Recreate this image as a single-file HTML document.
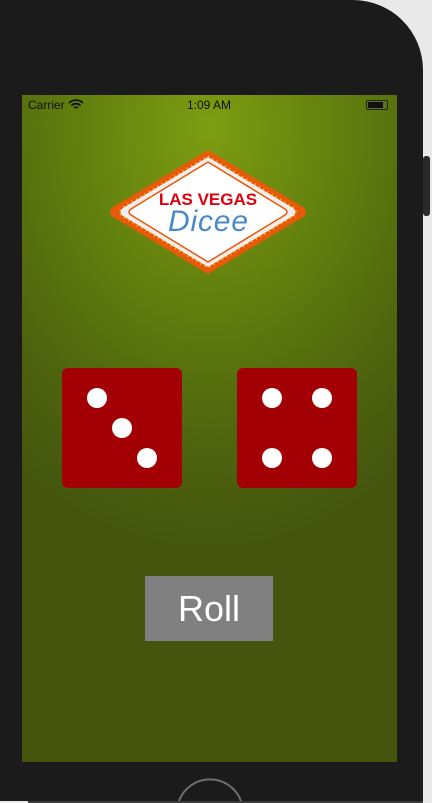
<!DOCTYPE html>
<html><head><style>
html,body{margin:0;width:432px;height:803px;overflow:hidden}
body{background:#e9e9e9;font-family:"Liberation Sans",sans-serif}
#w{position:relative;width:432px;height:803px;overflow:hidden}
.screen{position:absolute;left:22px;top:95px;width:375px;height:667px;background:radial-gradient(ellipse 320px 420px at 50% 5%,#7d9d12 0%,#62800e 40%,#4e640e 75%,#45550e 100%)}
.sb{position:absolute;top:3px;font-size:12px;color:#111}
.die{position:absolute;width:120px;height:120px;background:#a30006;border-radius:6px}
.dot{position:absolute;width:20px;height:20px;border-radius:50%;background:#fff}
.roll{position:absolute;left:123px;top:481px;width:128px;height:65px;background:#808080;color:#fff;font-size:36px;text-align:center;line-height:65px}
</style></head><body><div id="w">
<svg style="position:absolute;left:0;top:0" width="432" height="803" viewBox="0 0 432 803">
<path d="M0 0 H353 A70 70 0 0 1 423 70 V801 H0 Z" fill="#1b1b1b"/>
<rect x="423" y="156" width="7" height="60" rx="3" fill="#2a2a2a"/>
<rect x="28" y="801" width="395" height="2" fill="#3a3a3a"/>
<path d="M179 801 A33 33 0 0 1 241 801" fill="none" stroke="#6e6e6e" stroke-width="2"/>
</svg>
<div class="screen">
<div class="sb" style="left:6px">Carrier <svg width="16" height="11" viewBox="0 0 16 11" style="vertical-align:-1px"><path d="M1 4a10 10 0 0 1 14 0M3.5 6.5a6.5 6.5 0 0 1 9 0M6 9a3 3 0 0 1 4 0" stroke="#111" stroke-width="1.8" fill="none"/></svg></div>
<div class="sb" style="left:165px">1:09 AM</div>
<div style="position:absolute;left:344px;top:5px;width:20px;height:8px;border:1px solid #222;border-radius:2px"><div style="margin:1px;width:15px;height:6px;background:#111"></div></div>
<svg style="position:absolute;left:87px;top:52px" width="198" height="130" viewBox="0 0 198 130">
<path d="M99 3 L194 60 Q200 65 194 70 L99 127 L4 70 Q-2 65 4 60 Z" fill="#e85a0a"/>
<path d="M99 3 L194 60 Q200 65 194 70 L99 127 L4 70 Q-2 65 4 60 Z" fill="none" stroke="#ffd21a" stroke-width="2.5" stroke-dasharray="1 4.5" transform="translate(9.9 6.5) scale(0.9)"/>
<path d="M99 10 L184 61 Q189 65 184 69 L99 120 L14 69 Q9 65 14 61 Z" fill="#eee"/>
<path d="M99 15 L176 62 Q180 65 176 68 L99 115 L22 68 Q18 65 22 62 Z" fill="#fff" stroke="#e85a0a" stroke-width="1.5"/>
<text x="99" y="58" text-anchor="middle" font-family="Liberation Sans" font-weight="bold" font-size="17" fill="#e0000e">LAS VEGAS</text>
<text x="99" y="84" text-anchor="middle" font-family="Liberation Sans" font-style="italic" font-size="30" fill="#4a8ac8" textLength="80">Dicee</text>
</svg>
<div class="die" style="left:40px;top:273px"><div class="dot" style="left:25px;top:20px"></div><div class="dot" style="left:50px;top:50px"></div><div class="dot" style="left:75px;top:80px"></div></div>
<div class="die" style="left:215px;top:273px"><div class="dot" style="left:25px;top:20px"></div><div class="dot" style="left:75px;top:20px"></div><div class="dot" style="left:25px;top:80px"></div><div class="dot" style="left:75px;top:80px"></div></div>
<div class="roll">Roll</div>
</div>
</div></body></html>
